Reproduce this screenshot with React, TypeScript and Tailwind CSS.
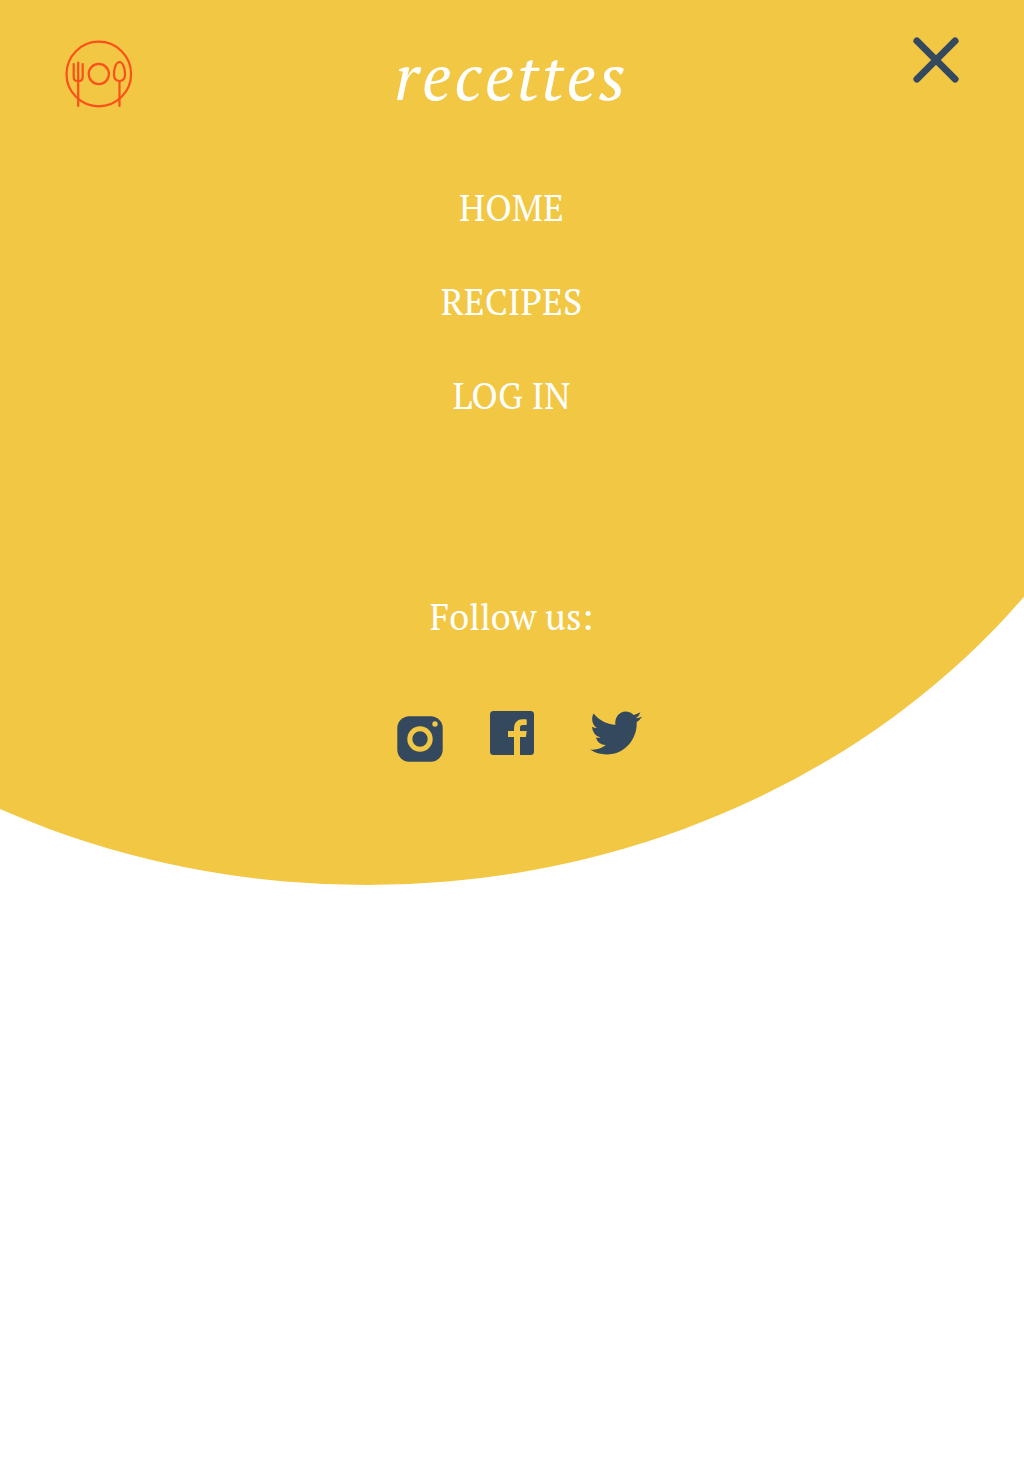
const navItems = ["HOME", "RECIPES", "LOG IN"];

export default function App() {
  return (
    <div className="relative h-[1468px] w-full overflow-hidden bg-white font-['PT_Serif','Liberation_Serif',serif] text-white">
      <div className="absolute -top-[583px] left-[-461px] h-[1468px] w-[1655px] rounded-[50%] bg-[#f2c744]" />
      <div className="relative flex flex-col items-center">
        <header className="grid h-[184px] w-full grid-cols-[1fr_auto_1fr] items-start px-[64px]">
          <svg className="mt-[39px] h-[70px] w-[70px]" viewBox="0 0 70 70" fill="none" stroke="#fb501a" strokeWidth="2.200" strokeLinecap="round">
            <circle cx="34.800" cy="35" r="32.3" />
            <circle cx="34.800" cy="35" r="10.1" />
            <path d="M14.2 23.500v43.500M9.700 25v12.500q0 4.500 3.500 4.500h2q3.500 0 3.500-4.500v-12.500M55.500 42v25" />
            <path d="M55.500 23c-3.700 0-5.500 7-5.500 12.500 0 4 1.800 6.500 5.500 6.500s5.500-2.500 5.500-6.500c0-5.500-1.800-12.500-5.500-12.500z" />
          </svg>
          <h1 className="mt-[36px] pr-px text-[64px] leading-[80px] tracking-[3.2px] italic">recettes</h1>
          <button aria-label="Close" className="mt-[36px] justify-self-end">
            <svg className="h-12 w-12" viewBox="0 0 48 48" stroke="#34495e" strokeWidth="7" strokeLinecap="round">
              <path d="M4.900 4.900l38.200 38.200M43.100 4.900L4.900 43.100" />
            </svg>
          </button>
        </header>
        <nav className="flex flex-col items-center gap-[46px] pr-px text-4xl leading-[48px]">
          {navItems.map((label) => (
            <a key={label} className="leading-[48px]">{label}</a>
          ))}
        </nav>
        <p className="mt-[173px] pr-px text-4xl leading-[48px]">Follow us:</p>
        <div className="mt-[70px] flex w-full items-start pl-[397px]">
          <svg className="mt-[5px] h-[46px] w-[46px]" viewBox="0 0 46 46">
            <rect x="0.300" y="0.300" width="45.400" height="45.400" rx="12" fill="#34495e" />
            <circle cx="23" cy="23" r="10.200" fill="none" stroke="#f2c744" strokeWidth="5" />
            <circle cx="38" cy="8" r="2.700" fill="#f2c744" />
          </svg>
          <svg className="ml-[47px] h-11 w-11" viewBox="0 0 44 44">
            <rect width="44" height="44" rx="3.500" fill="#34495e" />
            <path d="M24 44V26h-6v-6h6v-2c0-6.500 3.500-9.800 8.500-9.800 2 0 3.500.1 4.200.3v5.500H33c-2.500 0-3 1.300-3 3v3h6.700l-.8 6H30v18z" fill="#f2c744" />
          </svg>
          <svg className="ml-[56px] h-[44px] w-[52px]" viewBox="0 0 24 20" preserveAspectRatio="none" fill="#34495e">
            <path d="M23.950 2.570a10 10 0 01-2.820.770 4.960 4.960 0 002.160-2.720c-.950.550-2 .950-3.130 1.180a4.920 4.920 0 00-8.380 4.480C7.690 6.100 4.070 4.130 1.640 1.160a4.820 4.820 0 00-.660 2.480c0 1.710.870 3.210 2.190 4.100a4.900 4.900 0 01-2.230-.620v.060a4.920 4.920 0 003.950 4.830 5 5 0 01-2.210.080 4.940 4.940 0 004.600 3.420A9.870 9.870 0 010 17.540a14 14 0 007.560 2.210c9.050 0 14-7.500 14-13.990 0-.210 0-.420-.020-.630a9.940 9.940 0 002.460-2.550z" />
          </svg>
        </div>
      </div>
    </div>
  );
}
